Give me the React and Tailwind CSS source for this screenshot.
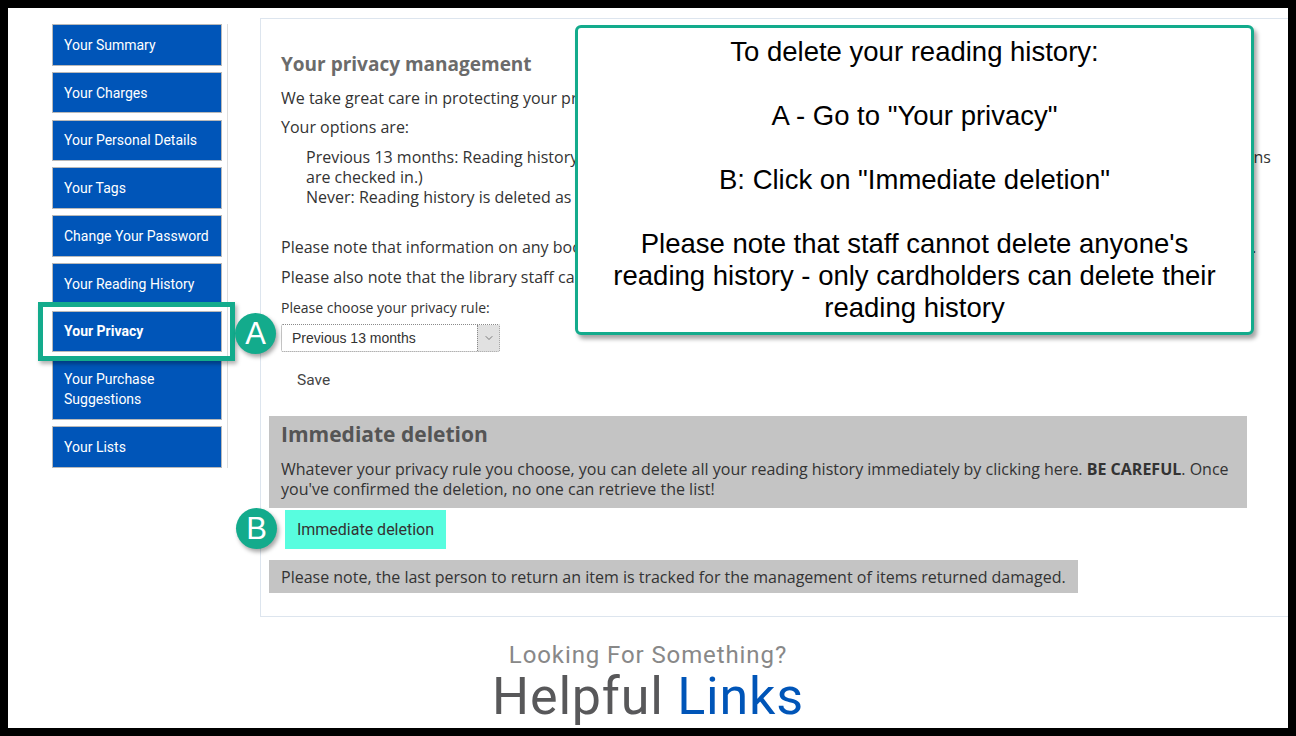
import { ChevronDown } from 'lucide-react';

const menuItems = [
  { id: 'summary', label: 'Your Summary' },
  { id: 'charges', label: 'Your Charges' },
  { id: 'details', label: 'Your Personal Details' },
  { id: 'tags', label: 'Your Tags' },
  { id: 'password', label: 'Change Your Password' },
  { id: 'history', label: 'Your Reading History' },
  { id: 'privacy', label: 'Your Privacy', active: true },
  { id: 'suggestions', label: 'Your Purchase Suggestions', tall: true },
  { id: 'lists', label: 'Your Lists' },
];

function Badge({ letter }) {
  return (
    <div className="flex h-[41px] w-[41px] items-center justify-center rounded-full bg-[#13ab8c] text-[31px] leading-none text-white shadow-[2px_3px_4px_rgba(0,0,0,0.35)] font-['Liberation_Sans',sans-serif]">
      {letter}
    </div>
  );
}

export default function App() {
  return (
    <div className="h-[736px] w-[1296px] overflow-hidden bg-black p-[8px]">
      <div className="relative h-[720px] w-[1280px] overflow-hidden bg-white font-['Open_Sans',sans-serif] text-[#333]">
        <div className="flex items-start">
          {/* Sidebar */}
          <nav className="ml-[44px] mt-[16px] flex w-[176px] flex-col gap-[6.25px] border-r border-[#dedede] pr-[5px] font-['Roboto',sans-serif]">
            {menuItems.map((item) => (
              <div
                key={item.id}
                className={`flex w-[170px] items-center border border-[#b9b9b9] bg-[#0055b8] px-[11px] text-[14px] leading-[20px] text-white ${
                  item.tall ? 'h-[61.5px]' : 'h-[41.5px]'
                } ${item.active ? 'font-bold' : ''}`}
              >
                {item.label}
              </div>
            ))}
          </nav>

          {/* Main panel */}
          <main className="ml-[32px] mt-[10px] w-[1040px] shrink-0 border border-[#dde5ee] pb-[23px] pl-[20px] pt-[31px]">
            <div className="w-[990px] text-[16px] leading-[20px]">
              <h1 className="text-[19px] font-bold leading-[28px] text-[#6b6b6b]">Your privacy management</h1>
              <p className="mt-[10px]">
                We take great care in protecting your privacy. On this screen, you can define how long we keep your reading history.
              </p>
              <p className="mt-[9px]">Your options are:</p>
              <div className="mt-[10px] pl-[25px]">
                <p>
                  <span className="whitespace-nowrap">
                    Previous 13 months: Reading history is retained for 13 months from the checkout date. (History is kept until all of your open loans
                  </span>
                  <br />
                  are checked in.)
                </p>
                <p>Never: Reading history is deleted as soon as items are checked in.</p>
              </div>
              <p className="mt-[30px] whitespace-nowrap">
                Please note that information on any books still checked out must be kept by the library no matter which privacy option you choose.
              </p>
              <p className="mt-[10px]">
                Please also note that the library staff can't update these values for you: it's your privacy!
              </p>
              <p className="mt-[11px] text-[14px]">Please choose your privacy rule:</p>
              <div className="mt-[6px] flex h-[28px] w-[219px] items-stretch rounded-[2px] border border-dotted border-[#8a8a8a] font-['Liberation_Sans',sans-serif] text-[14px] text-[#333]">
                <span className="flex flex-1 items-center pl-[10px]">Previous 13 months</span>
                <span className="flex w-[22px] items-center justify-center border-l border-dotted border-[#8a8a8a] bg-[#e1e1e1]">
                  <ChevronDown size={12} strokeWidth={1.5} className="text-[#555]" />
                </span>
              </div>
              <div className="ml-[16px] mt-[18px] font-['Roboto',sans-serif] text-[15.5px] text-[#444]">Save</div>

              <section className="-ml-[12px] mt-[26px] w-[978px] bg-[#c4c4c4] px-[12px] pb-[9px] pt-[4px]">
                <h2 className="text-[21px] font-bold leading-[28px] text-[#555]">Immediate deletion</h2>
                <p className="mt-[11px]">
                  Whatever your privacy rule you choose, you can delete all your reading history immediately by clicking here.{' '}
                  <strong>BE CAREFUL</strong>. Once you've confirmed the deletion, no one can retrieve the list!
                </p>
              </section>
              <div className="ml-[4px] mt-[2px] flex h-[39px] w-[161px] items-center justify-center bg-[#58fddf] font-['Roboto',sans-serif] text-[16px] text-[#333]">
                Immediate deletion
              </div>
              <div className="-ml-[12px] mt-[11px] inline-flex h-[33px] items-center bg-[#c4c4c4] px-[12px]">
                Please note, the last person to return an item is tracked for the management of items returned damaged.
              </div>
            </div>
          </main>
        </div>

        {/* Footer */}
        <footer className="mt-[24px] text-center font-['Roboto',sans-serif]">
          <div className="text-[24px] leading-[28px] tracking-[0.9px] text-[#888]">Looking For Something?</div>
          <div className="text-[52px] leading-[56px] tracking-[0.8px] text-[#58585a]">
            Helpful <span className="text-[#0055b8]">Links</span>
          </div>
        </footer>

        {/* Highlight around Your Privacy */}
        <div className="absolute left-[30px] top-[294px] h-[59px] w-[197px] border-[5px] border-[#13ab8c] shadow-[2px_3px_4px_rgba(0,0,0,0.3)]" />
        <div className="absolute left-[227px] top-[305px]">
          <Badge letter="A" />
        </div>
        <div className="absolute left-[228px] top-[500px]">
          <Badge letter="B" />
        </div>

        {/* Callout */}
        <div className="absolute left-[567px] top-[17px] h-[310px] w-[679px] rounded-[6px] border-[3px] border-[#13ab8c] bg-white pt-[8px] text-center font-['Liberation_Sans',sans-serif] text-[27.5px] leading-[32px] text-black shadow-[3px_4px_4px_rgba(0,0,0,0.35)]">
          To delete your reading history:
          <br />
          <br />
          A - Go to "Your privacy"
          <br />
          <br />
          B: Click on "Immediate deletion"
          <br />
          <br />
          Please note that staff cannot delete anyone's
          <br />
          reading history - only cardholders can delete their
          <br />
          reading history
        </div>
      </div>
    </div>
  );
}
